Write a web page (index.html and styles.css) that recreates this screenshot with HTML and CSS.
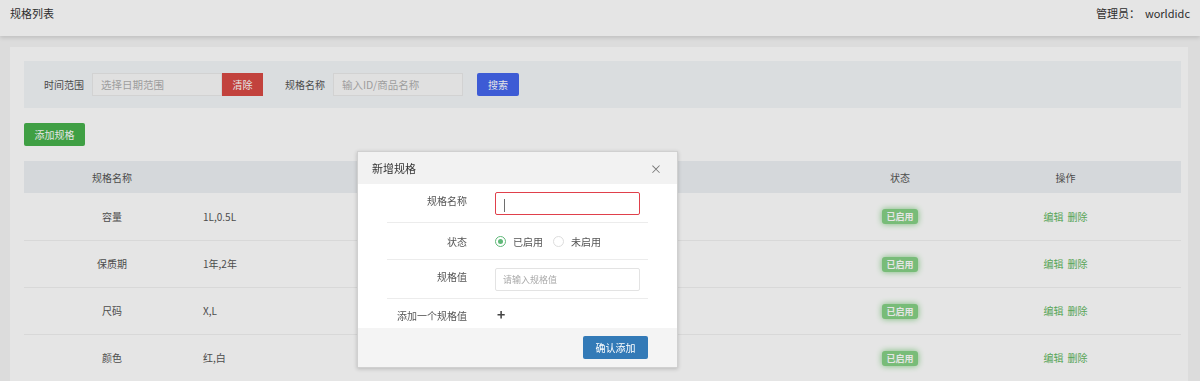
FILE: index.html
```html
<!DOCTYPE html>
<html lang="zh-CN">
<head>
    <meta charset="UTF-8">
    <meta name="viewport" content="width=device-width, initial-scale=1.0">
    <title>规格列表</title>
    <link rel="stylesheet" href="styles.css">
</head>
<body>
    <header class="topbar">
        <span class="page-title">规格列表</span>
        <span class="admin">管理员：&nbsp; worldidc</span>
    </header>

    <main class="card">
        <!-- 搜索条件 -->
        <div class="search-bar">
            <label class="search-label">时间范围</label>
            <input type="text" class="search-input" placeholder="选择日期范围">
            <button type="button" class="btn btn-red">清除</button>
            <label class="search-label label-gap">规格名称</label>
            <input type="text" class="search-input" placeholder="输入ID/商品名称">
            <button type="button" class="btn btn-blue btn-search">搜索</button>
        </div>

        <button type="button" class="btn btn-green btn-add">添加规格</button>

        <!-- 规格列表 -->
        <table class="spec-table">
            <thead>
                <tr>
                    <th class="col-name">规格名称</th>
                    <th class="col-values"></th>
                    <th class="col-status">状态</th>
                    <th class="col-ops">操作</th>
                </tr>
            </thead>
            <tbody>
                <tr>
                    <td class="col-name">容量</td>
                    <td class="col-values">1L,0.5L</td>
                    <td class="col-status"><span class="badge">已启用</span></td>
                    <td class="col-ops"><a class="op">编辑</a><a class="op">删除</a></td>
                </tr>
                <tr>
                    <td class="col-name">保质期</td>
                    <td class="col-values">1年,2年</td>
                    <td class="col-status"><span class="badge">已启用</span></td>
                    <td class="col-ops"><a class="op">编辑</a><a class="op">删除</a></td>
                </tr>
                <tr>
                    <td class="col-name">尺码</td>
                    <td class="col-values">X,L</td>
                    <td class="col-status"><span class="badge">已启用</span></td>
                    <td class="col-ops"><a class="op">编辑</a><a class="op">删除</a></td>
                </tr>
                <tr>
                    <td class="col-name">颜色</td>
                    <td class="col-values">红,白</td>
                    <td class="col-status"><span class="badge">已启用</span></td>
                    <td class="col-ops"><a class="op">编辑</a><a class="op">删除</a></td>
                </tr>
            </tbody>
        </table>
    </main>

    <!-- 遮罩和弹窗 -->
    <div class="mask"></div>
    <div class="modal">
        <div class="modal-head">
            <span class="modal-title">新增规格</span>
            <span class="modal-close">&times;</span>
        </div>
        <div class="modal-body">
            <div class="form-row row-name">
                <label class="form-label">规格名称</label>
                <div class="form-field"><input type="text" class="form-input input-error" value="|"></div>
            </div>
            <div class="form-row row-status">
                <label class="form-label">状态</label>
                <div class="form-field radios">
                    <span class="radio checked"></span><span class="radio-text">已启用</span>
                    <span class="radio"></span><span class="radio-text">未启用</span>
                </div>
            </div>
            <div class="form-row row-value">
                <label class="form-label">规格值</label>
                <div class="form-field"><input type="text" class="form-input" placeholder="请输入规格值"></div>
            </div>
            <div class="form-row row-add">
                <label class="form-label">添加一个规格值</label>
                <div class="form-field"><span class="plus">+</span></div>
            </div>
        </div>
        <div class="modal-foot">
            <button type="button" class="btn btn-primary">确认添加</button>
        </div>
    </div>
</body>
</html>
```

FILE: styles.css
```css
* {
    box-sizing: border-box;
}
body {
    margin: 0;
    background-color: #f5f5f5;
    font-family: "Noto Sans CJK SC", "Noto Sans", sans-serif;
    font-size: 10px;
    color: #555;
}
.topbar {
    height: 36px;
    background-color: #fff;
    box-shadow: 0 2px 4px rgba(0, 0, 0, 0.12);
    display: flex;
    align-items: center;
    justify-content: space-between;
    padding: 0 10px 10px 10px;
    font-size: 11px;
    color: #333;
}
.card {
    margin: 11px 12px 0 10px;
    background-color: #fff;
    padding: 14px 7px 0 14px;
    height: 340px;
}
.search-bar {
    height: 47px;
    background-color: #f3f6f9;
    display: flex;
    align-items: center;
    padding-left: 20px;
}
.search-label {
    margin-right: 8px;
    color: #555;
}
.label-gap {
    margin-left: 22px;
}
.search-input {
    width: 130px;
    height: 23px;
    border: 1px solid #eaeaea;
    background-color: #fafafa;
    padding: 0 8px;
    font: inherit;
    font-size: 10.5px;
    color: #555;
}
.search-input::placeholder {
    color: #b0b0b0;
}
.btn {
    height: 23px;
    border: none;
    border-radius: 2px;
    color: #fff;
    font: inherit;
    cursor: pointer;
}
.btn-red {
    width: 41px;
    background-color: #d84a45;
    border-radius: 0;
}
.btn-blue {
    width: 42px;
    background-color: #4466ee;
}
.btn-search {
    margin-left: 14px;
}
.btn-green {
    background-color: #47b24c;
}
.btn-add {
    display: block;
    width: 61px;
    margin-top: 15px;
    margin-bottom: 15px;
}
.spec-table {
    width: 100%;
    border-collapse: collapse;
    table-layout: fixed;
}
.spec-table th {
    height: 32px;
    background-color: #eef1f4;
    font-weight: normal;
    color: #555;
}
.spec-table td {
    height: 47px;
    border-bottom: 1px solid #f1f1f1;
    color: #555;
}
.col-name {
    width: 176px;
    text-align: center;
}
.col-values {
    text-align: left;
    padding-left: 3px;
}
.col-status {
    width: 100px;
    text-align: center;
}
.col-ops {
    width: 231px;
    text-align: center;
}
.badge {
    display: inline-block;
    width: 36px;
    height: 15px;
    line-height: 15px;
    border-radius: 3px;
    background-color: #86d286;
    box-shadow: 0 0 6px #86d286;
    color: #fff;
    font-size: 9px;
    font-weight: bold;
    text-align: center;
}
.op {
    color: #62b862;
    margin: 0 2px;
    cursor: pointer;
}
.mask {
    position: fixed;
    inset: 0;
    background-color: rgba(0, 0, 0, 0.1);
}
.modal {
    position: fixed;
    left: 357px;
    top: 151px;
    width: 321px;
    background-color: #fff;
    border: 1px solid #d0d0d0;
    box-shadow: 0 1px 4px rgba(0, 0, 0, 0.2);
}
.modal-head {
    height: 32px;
    background-color: #f2f2f2;
    display: flex;
    align-items: center;
    justify-content: space-between;
    padding: 0 15px 0 14px;
    font-size: 11px;
    color: #333;
}
.modal-close {
    font-size: 12px;
    color: #777;
}
.modal-body {
    padding: 0 29px;
}
.form-row {
    display: flex;
    align-items: center;
    border-bottom: 1px solid #ececec;
}
.row-name {
    height: 39px;
}
.row-status {
    height: 37px;
}
.row-value {
    height: 39px;
}
.row-add {
    height: 29px;
    border-bottom: none;
}
.form-label {
    width: 80px;
    text-align: right;
    color: #555;
}
.row-name .form-label {
    margin-top: -5px;
}
.row-value .form-label {
    margin-top: -5px;
}
.row-add .form-label {
    margin-top: 3px;
}
.form-field {
    margin-left: 28px;
    display: flex;
    align-items: center;
}
.form-input {
    width: 145px;
    height: 23px;
    border: 1px solid #e3e3e3;
    border-radius: 2px;
    padding: 0 7px;
    font: inherit;
    font-size: 9px;
    color: #555;
}
.form-input::placeholder {
    color: #aaa;
}
.input-error {
    border-color: #e0404b;
    font-size: 12px;
    color: #444;
}
.radio {
    width: 11px;
    height: 11px;
    border: 1px solid #ddd;
    border-radius: 50%;
    display: inline-flex;
    align-items: center;
    justify-content: center;
}
.radio.checked {
    border-color: #5fb878;
}
.radio.checked::after {
    content: "";
    width: 5px;
    height: 5px;
    border-radius: 50%;
    background-color: #5fb878;
}
.radio-text {
    margin: 0 10px 0 7px;
    color: #555;
}
.plus {
    margin-left: 2px;
    font-size: 14px;
    font-weight: bold;
    color: #444;
}
.modal-foot {
    height: 39px;
    background-color: #f4f4f4;
    display: flex;
    align-items: center;
    justify-content: flex-end;
    padding-right: 29px;
}
.btn-primary {
    width: 65px;
    background-color: #337ab7;
    font-size: 10px;
}
```
